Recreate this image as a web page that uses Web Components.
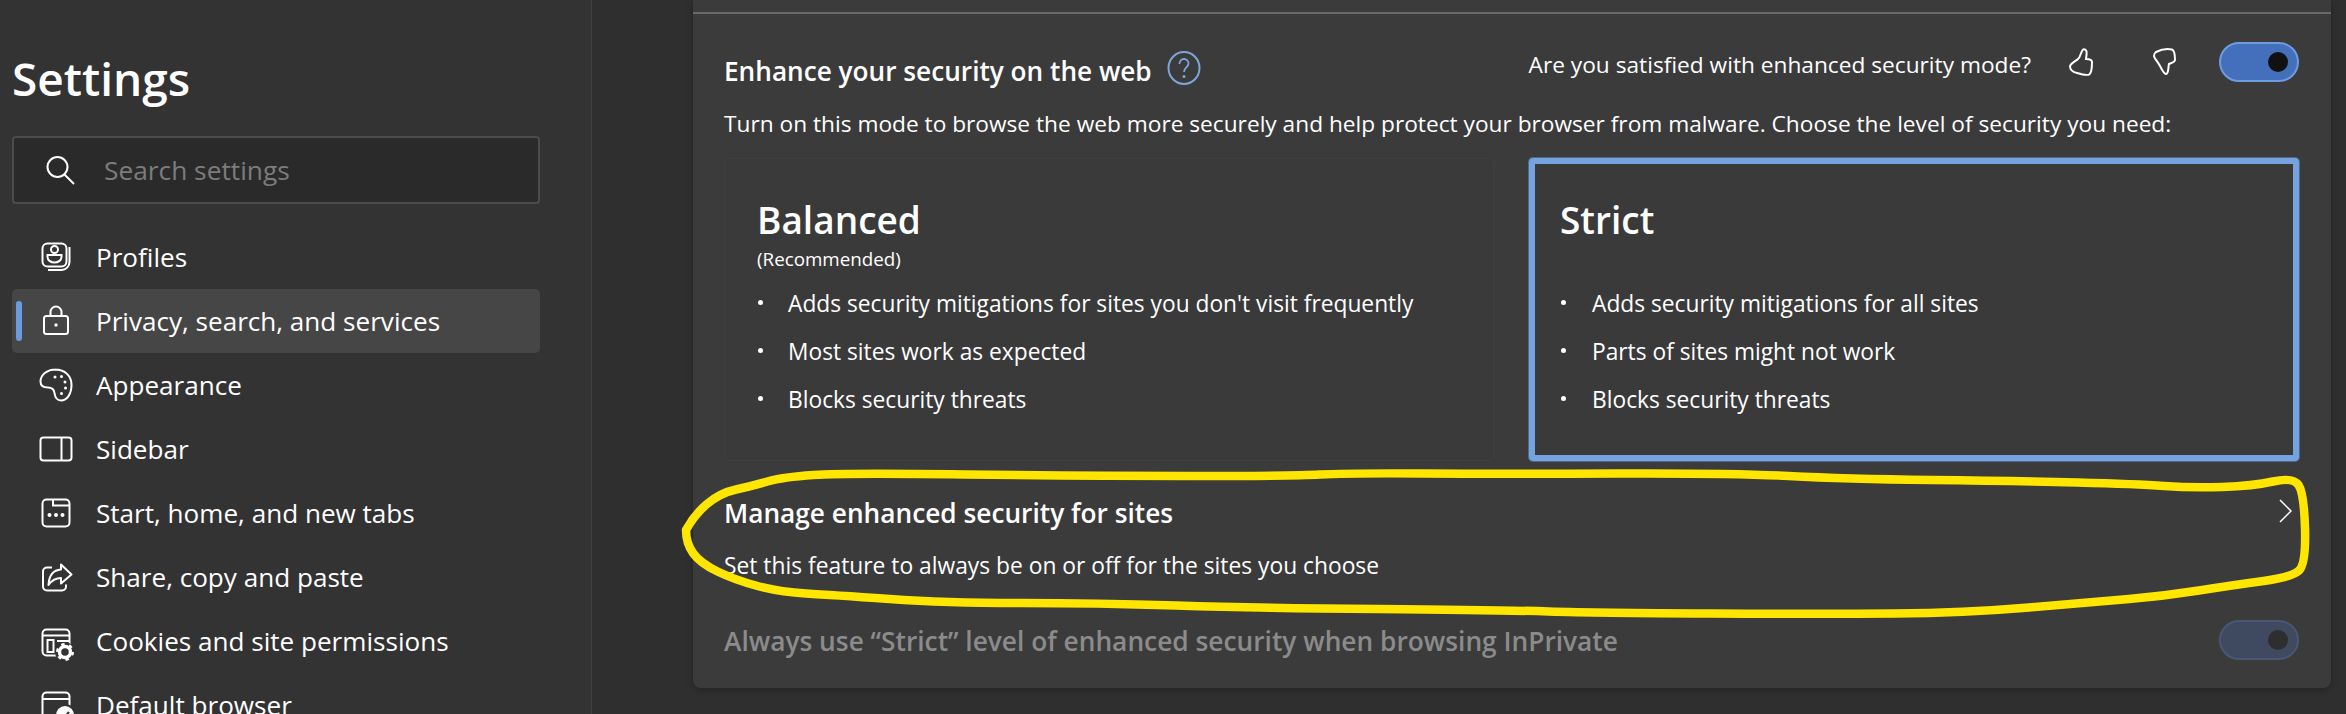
<!DOCTYPE html>
<html>
<head>
<meta charset="utf-8">
<title>Settings</title>
<style>
  html, body { margin: 0; height: 714px; overflow: hidden; background: #2f2f2f; }
  body { font-family: "Open Sans", "Noto Sans", sans-serif; color: #fff; position: relative; }
  settings-app svg { display: block; }
</style>
</head>
<body>
<settings-app>
  <settings-sidebar slot="side">
    <nav-item>
      <svg slot="icon" width="40" height="40" viewBox="0 0 40 40" fill="none" stroke="#fff" stroke-width="2"><rect x="6.500" y="6.500" width="24" height="23" rx="5"/><path d="M33.500 10v15a8 8 0 0 1-8 8H12"/><circle cx="18.500" cy="12.500" r="3.500"/><path d="M11.500 18h14v2c0 3-3 5.500-7 5.500s-7-2.500-7-5.500z"/></svg>
      Profiles
    </nav-item>
    <nav-item active>
      <svg slot="icon" width="40" height="40" viewBox="0 0 40 40" fill="none" stroke="#fff" stroke-width="2"><rect x="8" y="15" width="24" height="18" rx="2.500"/><path d="M14.500 15v-4a5.500 5.500 0 0 1 11 0v4"/><circle cx="20" cy="24" r="1.700" fill="#fff" stroke="none"/></svg>
      Privacy, search, and services
    </nav-item>
    <nav-item>
      <svg slot="icon" width="40" height="40" viewBox="0 0 40 40" fill="none" stroke="#fff" stroke-width="2"><path d="M19 4.500c10 0 16.500 6.500 16.500 15.500s-4.500 15.500-10.500 15.500c-5 0-6-3.500-6.500-7.500-.5-3.500-3-5.500-6.500-5.500-5 0-7.500-2.500-7.500-6 0-6.500 6.500-12 15-12z"/><g fill="#fff" stroke="none"><circle cx="19" cy="12" r="1.500"/><circle cx="25.500" cy="11.500" r="1.500"/><circle cx="29" cy="17" r="1.500"/><circle cx="29.500" cy="23" r="1.500"/><circle cx="25.500" cy="28.500" r="1.500"/></g></svg>
      Appearance
    </nav-item>
    <nav-item>
      <svg slot="icon" width="40" height="40" viewBox="0 0 40 40" fill="none" stroke="#fff" stroke-width="2"><rect x="4.500" y="8.500" width="31" height="23" rx="3"/><path d="M25.500 8.500v23"/></svg>
      Sidebar
    </nav-item>
    <nav-item>
      <svg slot="icon" width="40" height="40" viewBox="0 0 40 40" fill="none" stroke="#fff" stroke-width="2"><rect x="6.500" y="6.500" width="27" height="27" rx="4"/><path d="M17 6.500V12.500H33.500"/><g fill="#fff" stroke="none"><circle cx="13.500" cy="22" r="2"/><circle cx="20" cy="22" r="2"/><circle cx="26.500" cy="22" r="2"/></g></svg>
      Start, home, and new tabs
    </nav-item>
    <nav-item>
      <svg slot="icon" width="40" height="40" viewBox="0 0 40 40" fill="none" stroke="#fff" stroke-width="2"><path d="M16 10.500h-5a4 4 0 0 0-4 4v15a4 4 0 0 0 4 4h15a4 4 0 0 0 4-4v-2"/><path d="M25 7.500 35.500 17.500 25 26.500v-5.500c-5 0-9 2-12.500 7 .5-9 4.500-15 12.500-15.500z" stroke-linejoin="round"/></svg>
      Share, copy and paste
    </nav-item>
    <nav-item>
      <svg slot="icon" width="40" height="40" viewBox="0 0 40 40" fill="none" stroke="#fff" stroke-width="2"><rect x="6.500" y="8.500" width="27" height="26" rx="4"/><path d="M6.500 14.500h27M21 20h12"/><rect x="11.500" y="19" width="6" height="12"/><circle cx="29" cy="31" r="10" fill="#333" stroke="none"/><circle cx="29" cy="31" r="5.500" fill="none" stroke="#fff" stroke-width="3.500"/><circle cx="29" cy="31" r="7.500" fill="none" stroke="#fff" stroke-width="3" stroke-dasharray="3.300 4.550"/></svg>
      Cookies and site permissions
    </nav-item>
    <nav-item>
      <svg slot="icon" width="40" height="40" viewBox="0 0 40 40" fill="none" stroke="#fff" stroke-width="2"><rect x="6.500" y="7.500" width="27" height="30" rx="4"/><path d="M6.500 14h27"/><circle cx="29" cy="30" r="11" fill="#333" stroke="none"/><circle cx="29" cy="30" r="9" fill="#fff" stroke="none"/><path d="M25 30l3 3 5-6" stroke="#333" stroke-width="2.200"/></svg>
      Default browser
    </nav-item>
  </settings-sidebar>

  <security-panel slot="main">
    <span slot="title">Enhance your security on the web</span>
    <span slot="question">Are you satisfied with enhanced security mode?</span>
    <span slot="desc">Turn on this mode to browse the web more securely and help protect your browser from malware. Choose the level of security you need:</span>
    <level-card slot="cards" name="Balanced" note="(Recommended)">
      <li>Adds security mitigations for sites you don't visit frequently</li>
      <li>Most sites work as expected</li>
      <li>Blocks security threats</li>
    </level-card>
    <level-card slot="cards" name="Strict" selected>
      <li>Adds security mitigations for all sites</li>
      <li>Parts of sites might not work</li>
      <li>Blocks security threats</li>
    </level-card>
    <span slot="manage">Manage enhanced security for sites</span>
    <span slot="manage-sub">Set this feature to always be on or off for the sites you choose</span>
    <span slot="always">Always use “Strict” level of enhanced security when browsing InPrivate</span>
  </security-panel>
</settings-app>
<marker-scribble></marker-scribble>

<script>
class SettingsApp extends HTMLElement {
  constructor() {
    super();
    this.attachShadow({mode: 'open'}).innerHTML = `
      <style>
        :host { display: flex; height: 714px; overflow: hidden; }
      </style>
      <slot name="side"></slot>
      <slot name="main"></slot>`;
  }
}

class SearchBox extends HTMLElement {
  constructor() {
    super();
    this.attachShadow({mode: 'open'}).innerHTML = `
      <style>
        :host { display: flex; align-items: center; box-sizing: border-box; height: 68px; padding-left: 31px;
                background: #2a2a2a; border: 2px solid #4c4c4c; border-radius: 4px; }
        span { margin-left: 29px; font-size: 26.300px; color: #7c7c7c; }
      </style>
      <svg width="30" height="30" viewBox="0 0 30 30" fill="none" stroke="#fff" stroke-width="2"><circle cx="12.500" cy="12" r="10"/><path d="M19.500 19.500 29 29"/></svg>
      <span>Search settings</span>`;
  }
}

class SettingsSidebar extends HTMLElement {
  constructor() {
    super();
    this.attachShadow({mode: 'open'}).innerHTML = `
      <style>
        :host { display: block; box-sizing: border-box; width: 592px; height: 714px; flex: none;
                padding: 0 51px 0 12px; background: #333; border-right: 1px solid #404040; }
        h1 { margin: 0; padding-top: 50px; height: 36px; font-size: 46px; line-height: 56px; font-weight: 600; }
        search-box { margin-top: 50px; }
        nav { margin-top: 21px; display: flex; flex-direction: column; }
      </style>
      <h1>Settings</h1>
      <search-box></search-box>
      <nav><slot></slot></nav>`;
  }
}

class NavItem extends HTMLElement {
  constructor() {
    super();
    this.attachShadow({mode: 'open'}).innerHTML = `
      <style>
        :host { display: flex; align-items: center; position: relative; height: 64px; flex: none;
                border-radius: 5px; padding-left: 24px; font-size: 26.100px; white-space: nowrap; }
        :host([active]) { background: #464646; }
        :host([active])::before { content: ""; position: absolute; left: 4px; top: 12px; width: 6px; height: 40px;
                border-radius: 3px; background: #6a9bdc; }
        .icon { width: 40px; height: 40px; margin-right: 20px; flex: none; }
      </style>
      <div class="icon"><slot name="icon"></slot></div>
      <slot></slot>`;
  }
}

class ToggleSwitch extends HTMLElement {
  constructor() {
    super();
    this.attachShadow({mode: 'open'}).innerHTML = `
      <style>
        :host { display: flex; align-items: center; justify-content: flex-end; box-sizing: border-box; width: 80px; height: 40px; padding-right: 9px;
                border-radius: 20px; background: #4470bb; border: 2px solid #6f9be0; flex: none; }
        :host([disabled]) { background: #3f4a60; border-color: #4a5770; }
        i { width: 20px; height: 20px; border-radius: 50%; background: #111; }
        :host([disabled]) i { background: #2e2e2e; }
      </style>
      <i></i>`;
  }
}

class LevelCard extends HTMLElement {
  constructor() {
    super();
    this.attachShadow({mode: 'open'}).innerHTML = `
      <style>
        :host { display: block; box-sizing: border-box; height: 303px; padding: 36px 0 0 31px;
                background: #3a3a3a; border: 1px solid #3f3f3f; border-radius: 3px; }
        :host([selected]) { border: 0; padding: 37px 0 0 31px; border-radius: 4px;
                box-shadow: inset 0 0 0 6px #74a3df, 0 0 0 1px #50688c; }
        h2 { margin: 0; font-size: 37px; line-height: 50px; font-weight: 600; }
        p { margin: 0 0 6px; height: 28px; font-size: 18.800px; line-height: 28px; }
        ul { margin: 0; padding: 0; list-style: none; }
        ::slotted(li) { display: flex; align-items: center; height: 48px; font-size: 22.750px; white-space: nowrap; }
        ::slotted(li)::before { content: ""; width: 5px; height: 5px; border-radius: 50%; background: #fff;
                margin: 0 25px 2px 1px; flex: none; }
        :host([selected]) ::slotted(li)::before { margin-right: 26px; }
      </style>
      <h2 id="name"></h2>
      <p id="note"></p>
      <ul><slot></slot></ul>`;
  }
  connectedCallback() {
    this.shadowRoot.querySelector('#name').textContent = this.getAttribute('name') || '';
    this.shadowRoot.querySelector('#note').textContent = this.getAttribute('note') || '';
  }
}

class SecurityPanel extends HTMLElement {
  constructor() {
    super();
    this.attachShadow({mode: 'open'}).innerHTML = `
      <style>
        :host { display: block; box-sizing: border-box; width: 1638px; height: 688px; margin-left: 101px; flex: none;
                padding: 0 32px; background: #3b3b3b; border-radius: 0 0 8px 8px;
                box-shadow: 0 2px 6px rgba(0,0,0,.25); }
        .rule { height: 2px; margin: 0 -32px; padding-top: 12px; background: #686868; background-clip: content-box; }
        .head { display: flex; align-items: flex-start; height: 40px; margin-top: 28px; }
        .title { display: flex; align-items: center; font-size: 26.200px; font-weight: 600; line-height: 40px; margin: 9px 0 0 -1px; height: 40px; }
        .help { width: 34px; height: 36px; margin: -6px 0 0 15px; }
        .question { margin-left: auto; font-size: 22.700px; line-height: 40px; margin-top: 3px; }
        .thumb { flex: none; margin-top: 6px; }
        .up { margin-left: 38px; }
        .down { margin-left: 60px; }
        toggle-switch { margin-left: 43px; }
        .desc { margin: 24px 0 0 -1px; font-size: 22.700px; line-height: 36px; white-space: nowrap; }
        .cards { display: grid; grid-template-columns: 769px 770px; gap: 35px; margin-top: 16px; }
        .manage { display: flex; justify-content: space-between; margin-top: 33px; }
        .manage b { display: block; margin-left: -1px; font-size: 26.250px; font-weight: 600; line-height: 38px; }
        .manage span { display: block; margin: 16px 0 0 -1px; font-size: 22.800px; line-height: 36px; }
        .chev { margin: 5px 7px 0 0; }
        .always { display: flex; justify-content: space-between; margin-top: 36px; height: 40px; }
        .always b { margin-left: -1px; font-size: 26.300px; font-weight: 600; line-height: 42px; color: #8b8b8b; white-space: nowrap; }
      </style>
      <div class="rule"></div>
      <div class="head">
        <div class="title"><slot name="title"></slot>
          <svg class="help" viewBox="0 0 34 36" fill="none" stroke="#7da7da" stroke-width="2"><ellipse cx="17" cy="18" rx="15.500" ry="16"/><path d="M12.500 14c0-3 2-5 4.500-5s4.500 2 4.500 4.500c0 4-4.500 4-4.500 8.500" stroke-width="1.800"/><circle cx="17" cy="26.500" r="1.500" fill="#7da7da" stroke="none"/></svg>
        </div>
        <div class="question"><slot name="question"></slot></div>
        <svg class="thumb up" width="24" height="28" viewBox="0 0 24 28" fill="none" stroke="#fff" stroke-width="2"><path d="M15 1.200C17 1.200 18 3 17.500 7L17 11C20 11 23 12 23 14 23 19 22.500 24.500 20.500 26.200 18.500 27.800 13 26.500 8 25 3 24 .5 21 1.200 17.500 3 14.500 7 13 9 11 12 9 12 1.200 15 1.200Z"/></svg>
        <svg class="thumb down" width="23" height="27" viewBox="0 0 23 27" fill="none" stroke="#fff" stroke-width="2"><path d="M3 4C7 2 14 .5 19 1.500 21.500 2.500 22 7 22 12 22 14 18 15 16 16 15 19 16 25.500 13 26 11 26 9 22 7 18 5 14 1 10 1 8 1 6 1.500 5 3 4Z"/></svg>
        <toggle-switch></toggle-switch>
      </div>
      <div class="desc"><slot name="desc"></slot></div>
      <div class="cards"><slot name="cards"></slot></div>
      <div class="manage">
        <div><b><slot name="manage"></slot></b><span><slot name="manage-sub"></slot></span></div>
        <svg class="chev" width="13" height="24" viewBox="0 0 13 24" fill="none" stroke="#fff" stroke-width="1.500"><path d="M1 1l11 11L1 23"/></svg>
      </div>
      <div class="always">
        <b><slot name="always"></slot></b>
        <toggle-switch disabled></toggle-switch>
      </div>`;
  }
}

// the yellow marker ring somebody drew over the screenshot
const RING = [
  [686,530],[694,515],[720,493],[752,486],[783,477],[844,473],[1085,476],[1291,476],[1349,473],[1500,474],
  [1732,473],[1845,479],[2018,481],[2137,484],[2191,488],[2253,486],[2293,477],[2304,493],[2306,563],[2293,577],
  [2234,585],[2164,596],[2094,602],[1964,613],[1824,614],[1597,613],[1500,610],[1257,608],[1096,603],[947,603],
  [832,595],[780,592],[735,580],[700,563],[686,543]
];

class MarkerScribble extends HTMLElement {
  constructor() {
    super();
    let d = `M${RING[0]}`;
    for (let i = 1; i < RING.length - 1; i++) {
      const [x, y] = RING[i], [nx, ny] = RING[i + 1];
      d += ` Q${x} ${y} ${(x + nx) / 2} ${(y + ny) / 2}`;
    }
    d += ` Q${RING[RING.length - 1]} ${RING[0]}`;
    this.attachShadow({mode: 'open'}).innerHTML = `
      <style>
        :host { position: absolute; left: 0; top: 0; width: 2346px; height: 714px; pointer-events: none; }
      </style>
      <svg width="2346" height="714" fill="none"><path d="${d}" stroke="#ffe600" stroke-width="8.500" stroke-linecap="round" stroke-linejoin="round"/></svg>`;
  }
}

customElements.define('settings-app', SettingsApp);
customElements.define('search-box', SearchBox);
customElements.define('settings-sidebar', SettingsSidebar);
customElements.define('nav-item', NavItem);
customElements.define('toggle-switch', ToggleSwitch);
customElements.define('level-card', LevelCard);
customElements.define('security-panel', SecurityPanel);
customElements.define('marker-scribble', MarkerScribble);
</script>
</body>
</html>
